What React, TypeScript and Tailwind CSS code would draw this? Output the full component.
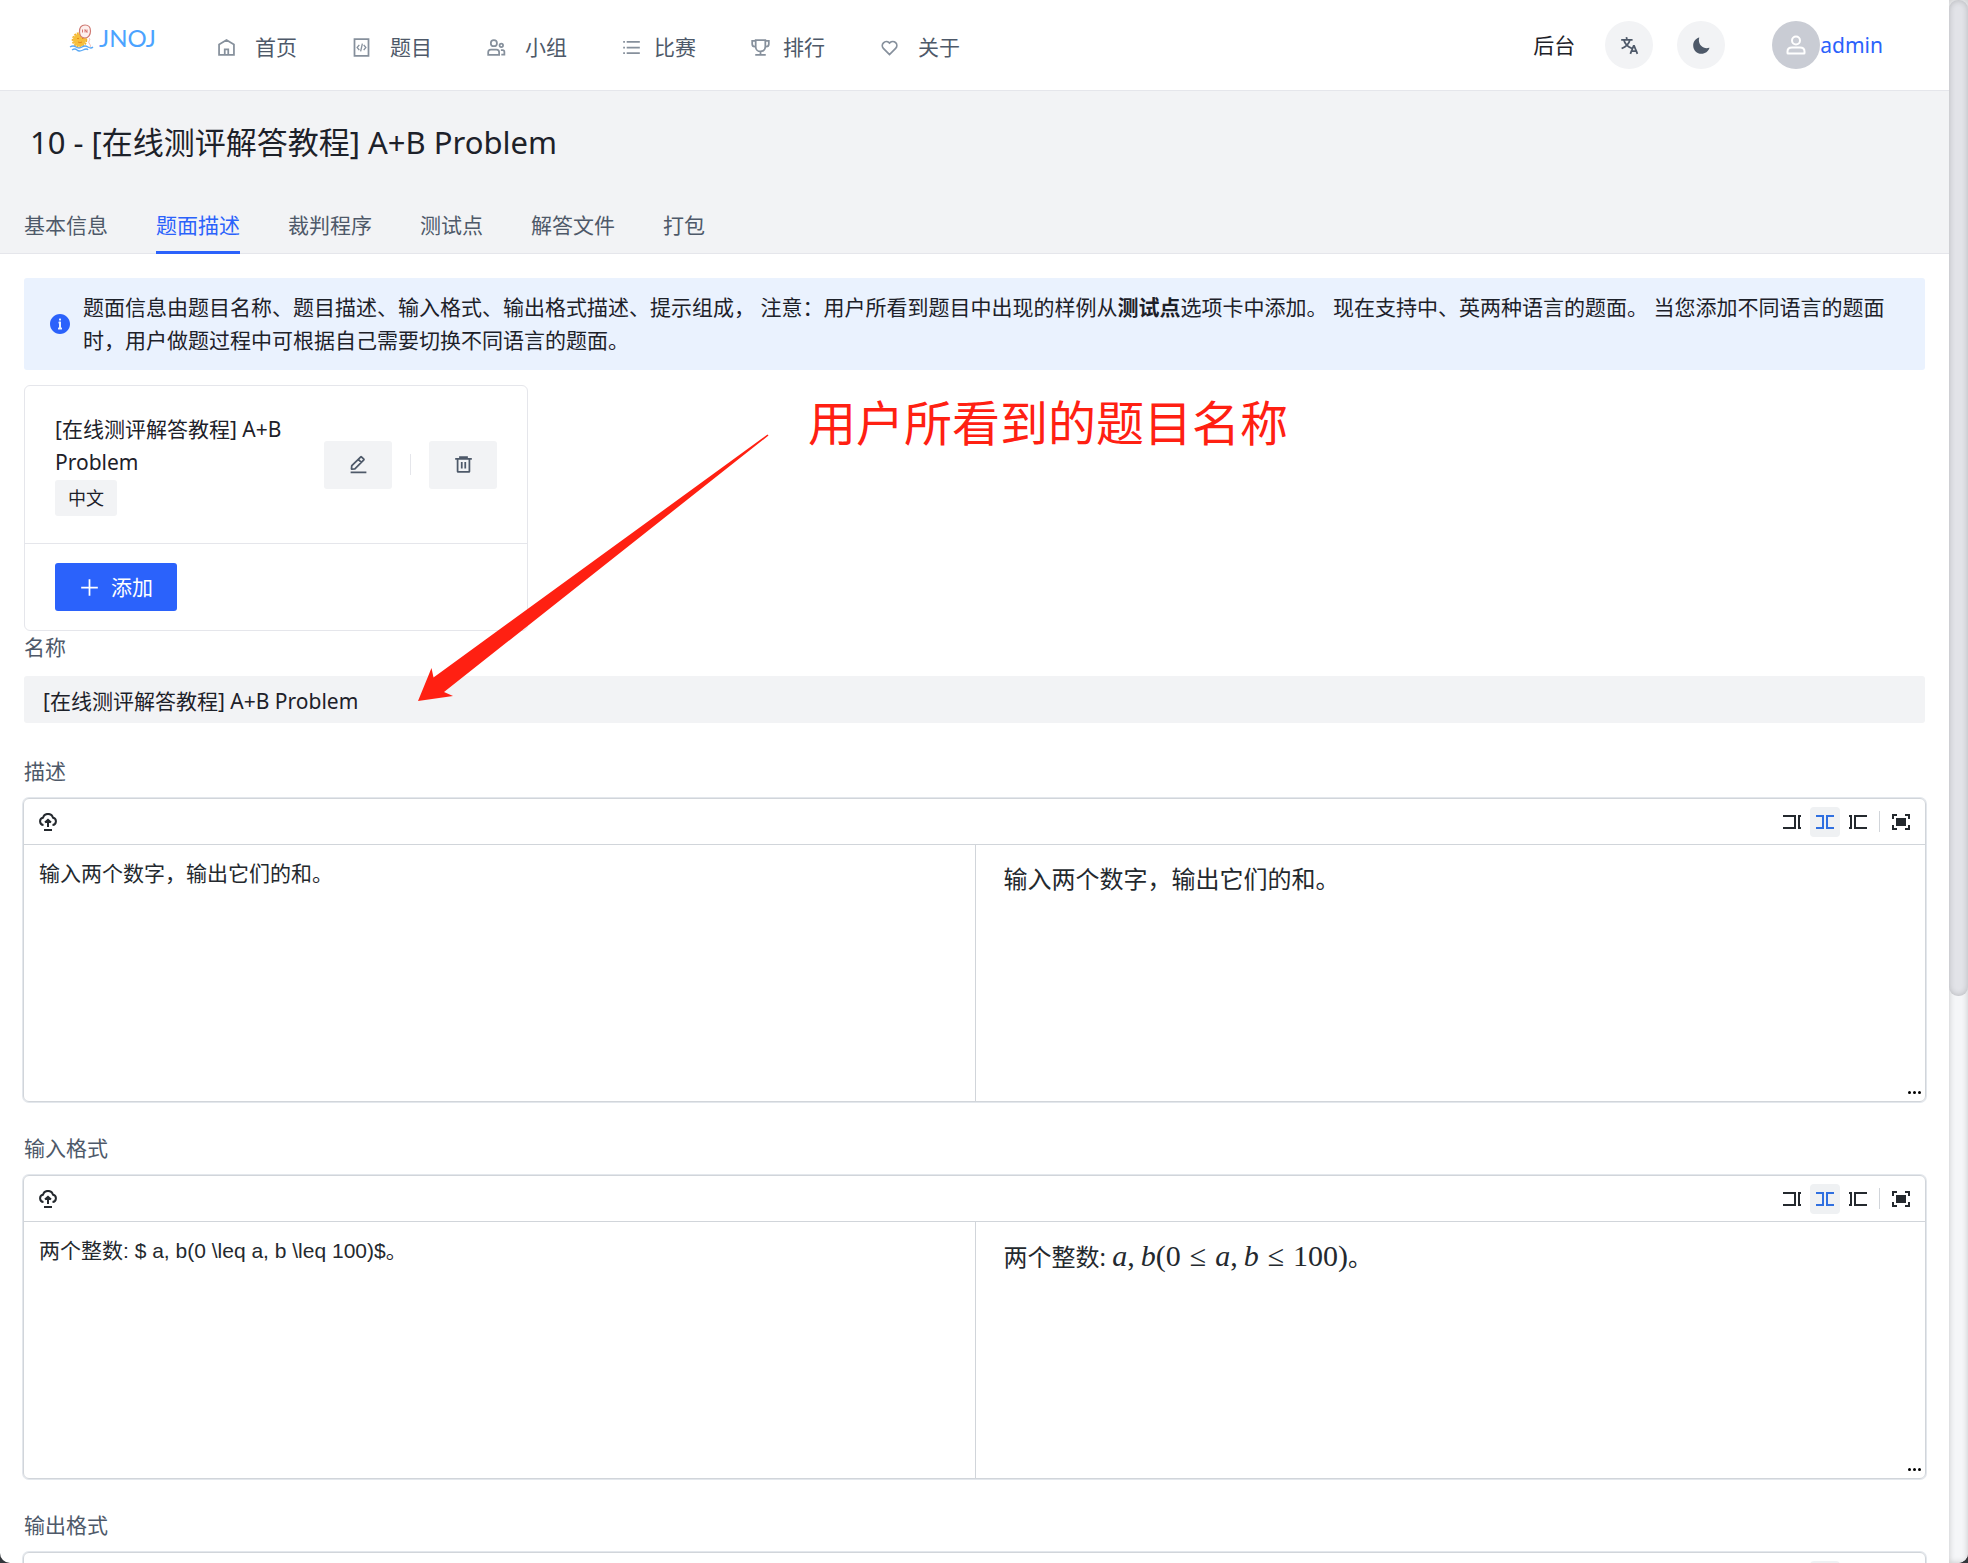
import { useState, type ReactNode } from "react";

type IconProps = {
  children: ReactNode;
  className?: string;
};

function Icon({ children, className = "size-[21px]" }: IconProps) {
  return (
    <svg
      viewBox="0 0 48 48"
      fill="none"
      stroke="currentColor"
      strokeWidth="4"
      aria-hidden="true"
      className={`shrink-0 ${className}`}
    >
      {children}
    </svg>
  );
}

const navItems = [
  {
    label: "首页",
    gap: "gap-[18px]",
    icon: <path d="M7 17 24 7l17 10v24H7V17ZM20 28h8v13h-8V28Z" />,
  },
  {
    label: "题目",
    gap: "gap-[18px]",
    icon: (
      <>
        <path d="M8 5h32v38H8V5Z" />
        <path d="m19 18-5 6 5 6M29 18l5 6-5 6M26 15l-4 18" strokeWidth="3" />
      </>
    ),
  },
  {
    label: "小组",
    gap: "gap-[18px]",
    icon: (
      <>
        <circle cx="18" cy="14" r="7" />
        <circle cx="35" cy="19" r="4" />
        <path d="M5 35a6 6 0 0 1 6-6h13a6 6 0 0 1 6 6v6H5v-6ZM34 30h4a4 4 0 0 1 4 4v6h-7" />
      </>
    ),
  },
  {
    label: "比赛",
    gap: "gap-3",
    icon: <path d="M13 24h30M5 11h4m4 26h30M13 11h30M5 24h4M5 37h4" />,
  },
  {
    label: "排行",
    gap: "gap-3",
    icon: (
      <path d="M24 33c-6.075 0-11-4.925-11-11m11 11c6.075 0 11-4.925 11-11m-11 11v8M13 22V7h22v15m-22 0V9H5v7a6 6 0 0 0 6 6h2Zm22 0V9h8v7a6 6 0 0 1-6 6h-2ZM12 41h24" />
    ),
  },
  {
    label: "关于",
    gap: "gap-[18px]",
    icon: (
      <path d="M38 13a9.2 9.2 0 0 1 0 13L24 40 10 26A9.2 9.2 0 0 1 23 13l1 1 1-1a9.2 9.2 0 0 1 13 0Z" />
    ),
  },
];

const tabs = ["基本信息", "题面描述", "裁判程序", "测试点", "解答文件", "打包"];

function Logo() {
  return (
    <a href="#home" className="mb-3.5 flex items-center gap-1">
      <svg viewBox="0 0 26 28" fill="none" aria-hidden="true" className="h-7 w-[26px]">
        <circle cx="10.5" cy="16" r="6.5" fill="#f6bf3c" />
        <circle cx="10.5" cy="16" r="7" stroke="#f3b32c" strokeWidth="1.5" strokeDasharray="2 1" />
        <path d="M8 14.5h2M13 14.5h1.5M9 18q2 1.5 4 0" stroke="#e8891c" />
        <path
          d="M16 1c4 0 5.5 2.5 5.5 6s-2 7-5.500 7-5.500-3-5.500-6.500S12 1 16 1Z"
          fill="#fdf0ee"
          stroke="#cf7a73"
          strokeWidth="1.2"
        />
        <path d="M13.5 5.5v3M16 8.5v-3l2 3v-3" stroke="#cf5b55" strokeWidth=".8" />
        <path d="M20 14c2 2-1 3 0 5s2 2 1 4" stroke="#f0b8b0" />
        <path
          d="M1 23q3-2 6 0t6 0 6 0 5 0M3 26q3-2 5 0t6 0 5 0"
          stroke="#5aa9f5"
          strokeWidth="1.3"
        />
      </svg>
      <span className="font-['Lato','Noto_Sans',sans-serif] text-2xl leading-7 text-[#4ba3ff]">
        JNOJ
      </span>
    </a>
  );
}

function Header() {
  return (
    <header className="flex h-[91px] items-center justify-between border-b border-[#e5e6eb] bg-white pl-[69px] pr-[66px]">
      <div className="flex items-center">
        <Logo />
        <nav className="ml-[60px] mt-1 flex items-center gap-[54px]">
          {navItems.map((item) => (
            <a
              key={item.label}
              href={`#${item.label}`}
              className={`flex items-center text-[#4e5969] ${item.gap}`}
            >
              <span className="text-[#86909c]">
                <Icon>{item.icon}</Icon>
              </span>
              {item.label}
            </a>
          ))}
        </nav>
      </div>

      <div className="flex items-center">
        <a href="#dashboard">后台</a>
        <button
          type="button"
          aria-label="语言"
          className="ml-[30px] flex size-12 items-center justify-center rounded-full bg-[#f2f3f5] text-[#4e5969]"
        >
          <Icon>
            <path d="m42 43-2.385-6M26 43l2.384-6m11.231 0-.795-2-4.18-10h-1.28l-4.181 10-.795 2m11.231 0h-11.23M17 5l1 5M5 11h26M11 11s1.889 7.826 6.611 12.174C22.333 27.522 30 31 30 31M25 11s-1.889 7.826-6.611 12.174C13.667 27.522 6 31 6 31" />
          </Icon>
        </button>
        <button
          type="button"
          aria-label="主题"
          className="ml-6 flex size-12 items-center justify-center rounded-full bg-[#f2f3f5] text-[#4e5969]"
        >
          <Icon>
            <path
              fill="currentColor"
              stroke="none"
              d="M42.108 29.769c.124-.387-.258-.736-.645-.613A17.99 17.99 0 0 1 36 30c-9.941 0-18-8.059-18-18 0-1.904.296-3.74.844-5.463.123-.387-.226-.768-.613-.645C10.558 8.334 5 15.518 5 24c0 10.493 8.507 19 19 19 8.482 0 15.666-5.558 18.108-13.231Z"
            />
          </Icon>
        </button>
        <a href="#admin" className="ml-[47px] flex items-center text-[#2b62fb]">
          <span className="flex size-12 items-center justify-center rounded-full bg-[#c9ccd4] text-white">
            <Icon className="size-6">
              <circle cx="24" cy="15" r="8" />
              <path d="M7 37c0-4.97 4.03-8 9-8h16c4.97 0 9 3.03 9 8v3a1 1 0 0 1-1 1H8a1 1 0 0 1-1-1v-3Z" />
            </Icon>
          </span>
          admin
        </a>
      </div>
    </header>
  );
}

function TitleBar() {
  const [active, setActive] = useState("题面描述");

  return (
    <div className="border-b border-[#e5e6eb] bg-[#f2f3f5] pt-[29px]">
      <h1 className="px-[30px] text-[31px] leading-[45px]">
        10 - [在线测评解答教程] A+B Problem
      </h1>
      <div role="tablist" className="-mb-px mt-11 flex gap-12 px-6">
        {tabs.map((tab) => (
          <button
            key={tab}
            type="button"
            role="tab"
            aria-selected={tab === active}
            onClick={() => setActive(tab)}
            className={
              tab === active
                ? "border-b-[3px] border-[#2b62fb] pb-[9px] text-[#2b62fb]"
                : "border-b-[3px] border-transparent pb-[9px] text-[#4e5969]"
            }
          >
            {tab}
          </button>
        ))}
      </div>
    </div>
  );
}

function Notice() {
  return (
    <div
      role="alert"
      className="flex items-center gap-[11px] rounded-[3px] bg-[#eaf2fe] px-6 py-[13px]"
    >
      <Icon className="size-6 text-[#2b62fb]">
        <path
          fill="currentColor"
          stroke="none"
          fillRule="evenodd"
          d="M24 44c11.046 0 20-8.954 20-20S35.046 4 24 4 4 12.954 4 24s8.954 20 20 20Zm2-30a1 1 0 0 0-1-1h-2a1 1 0 0 0-1 1v2a1 1 0 0 0 1 1h2a1 1 0 0 0 1-1v-2Zm0 17h1a1 1 0 0 1 1 1v2a1 1 0 0 1-1 1h-6a1 1 0 0 1-1-1v-2a1 1 0 0 1 1-1h1v-8a1 1 0 0 1-1-1v-2a1 1 0 0 1 1-1h3a1 1 0 0 1 1 1v11Z"
        />
      </Icon>
      <p>
        题面信息由题目名称、题目描述、输入格式、输出格式描述、提示组成，
        注意：用户所看到题目中出现的样例从<b>测试点</b>选项卡中添加。
        现在支持中、英两种语言的题面。
        当您添加不同语言的题面时，用户做题过程中可根据自己需要切换不同语言的题面。
      </p>
    </div>
  );
}

function StatementCard() {
  const action =
    "flex h-12 w-[68px] items-center justify-center rounded-[3px] bg-[#f2f3f5] text-[#4e5969]";

  return (
    <section className="mt-[15px] w-[504px] max-w-full rounded-md border border-[#e5e6eb]">
      <div className="flex items-center gap-[18px] border-b border-[#e5e6eb] px-[30px] py-[27px]">
        <div className="min-w-0 flex-1">
          <p>[在线测评解答教程] A+B Problem</p>
          <span className="mt-px inline-block rounded-[3px] bg-[#f2f3f5] px-[13px] text-lg leading-9">
            中文
          </span>
        </div>
        <div className="flex items-center gap-[18px]">
          <button type="button" aria-label="编辑" className={action}>
            <Icon>
              <path d="m30.48 19.038 5.733-5.734a1 1 0 0 0 0-1.414l-5.586-5.586a1 1 0 0 0-1.414 0l-5.734 5.734m7 7L15.763 33.754a1 1 0 0 1-.59.286l-6.048.708a1 1 0 0 1-1.113-1.069l.477-6.31a1 1 0 0 1 .29-.631l14.7-14.7m7 7-7-7M6 42h36" />
            </Icon>
          </button>
          <span className="h-[21px] w-px bg-[#e5e6eb]" />
          <button type="button" aria-label="删除" className={action}>
            <Icon>
              <path d="M5 11h5.5m0 0v29a1 1 0 0 0 1 1h25a1 1 0 0 0 1-1V11m-27 0H16m21.5 0H43m-5.5 0H32m-16 0V7h16v4m-16 0h16M20 18v15m8-15v15" />
            </Icon>
          </button>
        </div>
      </div>
      <div className="px-[30px] py-[19px]">
        <button
          type="button"
          className="flex h-12 items-center gap-[11px] rounded-[3px] bg-[#2b62fb] px-6 text-white"
        >
          <Icon>
            <path d="M5 24h38M24 5v38" />
          </Icon>
          添加
        </button>
      </div>
    </section>
  );
}

const toolButton = "flex size-[30px] items-center justify-center rounded-[4px]";

function EditorToolbar() {
  return (
    <div className="flex h-[46px] items-center justify-between border-b border-[#d1d5da] px-[9px]">
      <button type="button" aria-label="上传" className={toolButton}>
        <svg
          viewBox="0 0 18 18"
          fill="none"
          stroke="currentColor"
          strokeWidth="2"
          className="size-[18px]"
        >
          <path d="M4.5 12A3.7 3.7 0 0 1 4 4.700a5.2 5.2 0 0 1 10 0 3.7 3.7 0 0 1-.5 7.300M9 14V7M6 9.500l3-2.700 3 2.700M5 17h8" />
        </svg>
      </button>
      <div className="flex items-center gap-[3px]">
        <button type="button" aria-label="仅编辑" className={toolButton}>
          <svg viewBox="0 0 18 14" fill="none" stroke="currentColor" className="h-3.5 w-[18px]">
            <path d="M0 1h12v12H0" strokeWidth="2" />
            <path d="M18 1h-2v12h2" strokeWidth="2" />
          </svg>
        </button>
        <button
          type="button"
          aria-label="分栏"
          aria-pressed="true"
          className={`${toolButton} bg-[#eff1f3] text-[#2f6fe0]`}
        >
          <svg
            viewBox="0 0 18 14"
            fill="none"
            stroke="currentColor"
            strokeWidth="2"
            className="h-3.5 w-[18px]"
          >
            <path d="M0 1h7v12H0M18 1h-7v12h7" />
          </svg>
        </button>
        <button type="button" aria-label="仅预览" className={toolButton}>
          <svg viewBox="0 0 18 14" fill="none" stroke="currentColor" className="h-3.5 w-[18px]">
            <path d="M18 1H6v12h12" strokeWidth="2" />
            <path d="M0 1h2v12H0" strokeWidth="2" />
          </svg>
        </button>
        <span className="mx-[3px] h-[21px] w-px bg-[#d1d5da]" />
        <button type="button" aria-label="全屏" className={toolButton}>
          <svg
            viewBox="0 0 18 16"
            fill="none"
            stroke="currentColor"
            strokeWidth="2"
            className="h-4 w-[18px]"
          >
            <path d="M1 5V1h4M13 1h4v4M17 11v4h-4M5 15H1v-4" />
            <path d="M4 4h10v8H4z" fill="currentColor" stroke="none" />
          </svg>
        </button>
      </div>
    </div>
  );
}

type EditorFieldProps = {
  id: string;
  label: string;
  source?: string;
  children?: ReactNode;
};

function EditorField({ id, label, source = "", children }: EditorFieldProps) {
  return (
    <div className="mb-[30px]">
      <label htmlFor={id} className="block text-[#4e5969]">
        {label}
      </label>
      <div className="-mx-px mt-2.5 rounded-md border border-[#d1d5da] text-[#24292e] ring-1 ring-[#e3e7ec]">
        <EditorToolbar />
        <div className="relative grid h-64 grid-cols-2">
          <textarea
            id={id}
            defaultValue={source}
            className="resize-none px-[15px] py-3 font-['Liberation_Sans','Noto_Sans_CJK_SC',sans-serif] outline-none"
          />
          <div className="border-l border-[#d1d5da] px-7 py-4 text-2xl leading-9">{children}</div>
          <svg
            viewBox="0 0 13 3"
            aria-hidden="true"
            className="absolute bottom-[7px] right-[4px] h-[3px] w-[13px]"
          >
            <circle cx="1.5" cy="1.5" r="1.5" />
            <circle cx="6.5" cy="1.5" r="1.5" />
            <circle cx="11.5" cy="1.5" r="1.5" />
          </svg>
        </div>
      </div>
    </div>
  );
}

function Formula() {
  return (
    <span className="font-['Liberation_Serif',serif] text-3xl leading-9">
      <i>a</i>
      <span className="mr-1.5">,</span>
      <i>b</i>(0<span className="mx-[9px]">≤</span>
      <i>a</i>
      <span className="mr-1.5">,</span>
      <i>b</i>
      <span className="mx-[9px]">≤</span>
      100)
    </span>
  );
}

// Red callout drawn over the form, pointing at the name field
function Annotation() {
  return (
    <div className="pointer-events-none absolute left-[418px] top-[389px] text-[#ff2012]">
      <svg
        viewBox="0 0 352 268"
        fill="currentColor"
        aria-hidden="true"
        className="mt-[45px] h-[268px] w-[352px]"
      >
        <path d="M0 267 13.500 234 15.500 243.500 349.500 .5 350.500 1.500 26 258 35 262Z" />
      </svg>
      <p className="absolute left-[390px] top-0 whitespace-nowrap text-5xl leading-[68px]">
        用户所看到的题目名称
      </p>
    </div>
  );
}

export default function App() {
  return (
    <div className="h-screen overflow-hidden bg-[#33363b] font-['Noto_Sans','Noto_Sans_CJK_SC',sans-serif] text-[21px] leading-[33px] text-[#1d2129]">
      <div className="flex h-full overflow-hidden rounded-b-[10px] bg-white" lang="zh-CN">
        <div className="relative min-w-0 flex-1 overflow-hidden">
          <Header />
          <TitleBar />
          <main className="px-6 pt-6">
            <Notice />
            <StatementCard />
            <form>
              <label htmlFor="name" className="block text-[#4e5969]">
                名称
              </label>
              <input
                id="name"
                type="text"
                defaultValue="[在线测评解答教程] A+B Problem"
                className="mb-8 mt-3 block h-[47px] w-full rounded-[3px] bg-[#f2f3f5] px-[19px] outline-none"
              />
              <EditorField id="description" label="描述" source="输入两个数字，输出它们的和。">
                输入两个数字，输出它们的和。
              </EditorField>
              <EditorField
                id="input"
                label="输入格式"
                source="两个整数: $ a, b(0 \leq a, b \leq 100)$。"
              >
                两个整数: <Formula />。
              </EditorField>
              <EditorField id="output" label="输出格式" />
            </form>
          </main>
          <Annotation />
        </div>
        <div
          aria-hidden="true"
          className="w-[19px] shrink-0 bg-[#f5f6f8] shadow-[inset_0_0_6px_rgba(0,0,0,0.2)]"
        >
          <div className="h-[63.7%] rounded-[9px] bg-[#e2e3e8] shadow-[inset_0_0_6px_rgba(0,0,0,0.2)]" />
        </div>
      </div>
    </div>
  );
}
